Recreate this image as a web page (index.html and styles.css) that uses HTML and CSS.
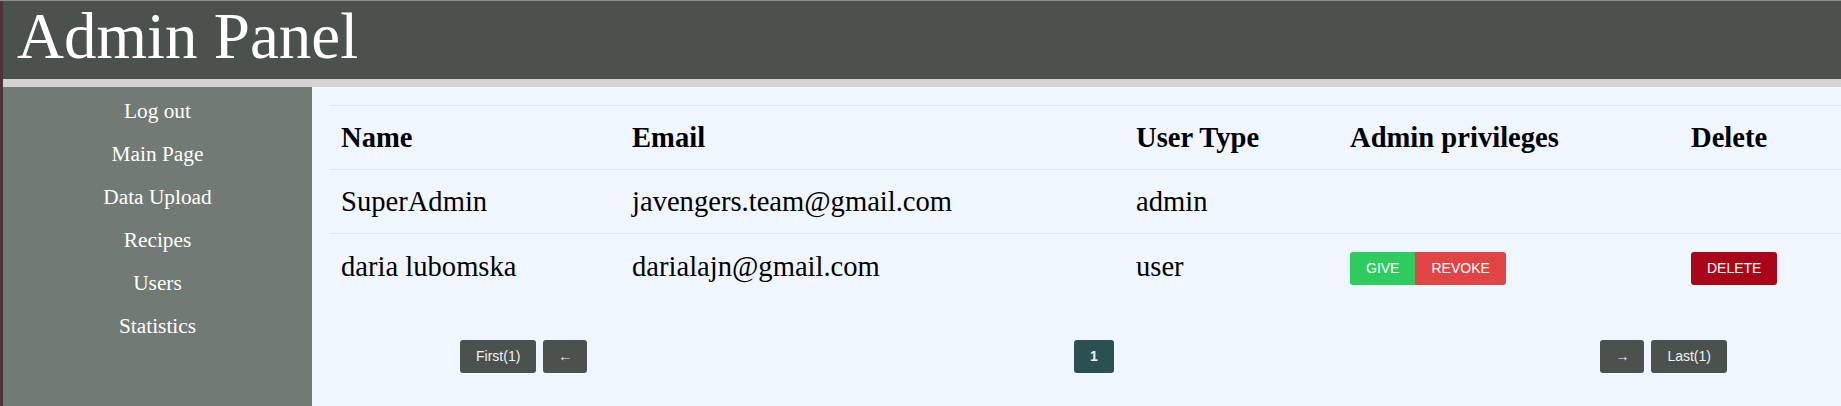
FILE: index.html
```html
<!DOCTYPE html>
<html lang="en">
<head>
<meta charset="utf-8">
<title>Admin Panel</title>
<link rel="stylesheet" href="styles.css">
</head>
<body>
<header class="topbar">
  <h1 class="title">Admin Panel</h1>
</header>
<div class="layout">
  <nav class="sidebar">
    <a href="#">Log out</a>
    <a href="#">Main Page</a>
    <a href="#">Data Upload</a>
    <a href="#">Recipes</a>
    <a href="#">Users</a>
    <a href="#">Statistics</a>
  </nav>
  <main class="main">
    <div class="inner">
      <table class="users">
        <colgroup>
          <col class="c-name"><col class="c-email"><col class="c-type"><col class="c-admin"><col class="c-del">
        </colgroup>
        <thead>
          <tr><th>Name</th><th>Email</th><th>User Type</th><th>Admin privileges</th><th>Delete</th></tr>
        </thead>
        <tbody>
          <tr><td>SuperAdmin</td><td>javengers.team@gmail.com</td><td>admin</td><td></td><td></td></tr>
          <tr>
            <td>daria lubomska</td><td>darialajn@gmail.com</td><td>user</td>
            <td><span class="btn-group"><button class="btn give">GIVE</button><button class="btn revoke">REVOKE</button></span></td>
            <td><button class="btn delete">DELETE</button></td>
          </tr>
        </tbody>
      </table>
      <div class="pager">
        <div class="pgroup"><button class="pbtn">First(1)</button><button class="pbtn arrow">&larr;</button></div>
        <div class="pgroup"><button class="pbtn current">1</button></div>
        <div class="pgroup"><button class="pbtn arrow">&rarr;</button><button class="pbtn">Last(1)</button></div>
      </div>
    </div>
  </main>
</div>
</body>
</html>
```
FILE: styles.css
```css
html, body {
  margin: 0;
  padding: 0;
}
body {
  background: #4b3337;
  border-top: 1px solid #8d8d8d;
  padding-left: 3px;
  min-height: 100vh;
  box-sizing: border-box;
  overflow: hidden;
  font-family: "Liberation Serif", "Times New Roman", serif;
  display: flex;
  flex-direction: column;
}
.topbar {
  height: 78px;
  background: #4b514d;
  border-bottom: 8px solid #d3d3d3;
  padding-left: 14px;
  flex: none;
}
.title {
  margin: 0;
  font-size: 65px;
  font-weight: normal;
  line-height: 71px;
  color: #ffffff;
}
.layout {
  display: flex;
  flex: 1;
  min-height: 0;
}
.sidebar {
  width: 309px;
  flex: none;
  background: #727a74;
  padding-top: 3px;
}
.sidebar a {
  display: block;
  line-height: 43px;
  text-align: center;
  color: #ffffff;
  font-size: 21.33px;
  text-decoration: none;
}
.main {
  flex: 1;
  min-width: 0;
  background: #eff6ff;
  padding: 18px 0 0 18px;
  overflow: hidden;
}
.inner {
  width: 1529px;
}
.users {
  width: 1529px;
  border-collapse: collapse;
  table-layout: fixed;
  font-size: 28.6px;
  line-height: 33px;
  color: #000;
}
.c-name { width: 291px; }
.c-email { width: 504px; }
.c-type { width: 214px; }
.c-admin { width: 341px; }
.c-del { width: 179px; }
.users th, .users td {
  border-top: 1px solid #e1e6ea;
  padding: 15px 11px;
  height: 33px;
  text-align: left;
  vertical-align: middle;
  white-space: nowrap;
}
.users th {
  font-weight: bold;
}
.btn-group {
  display: inline-flex;
  vertical-align: middle;
}
.btn {
  height: 33px;
  padding: 0 16px;
  border: none;
  color: #ffffff;
  font-family: "Liberation Sans", Arial, sans-serif;
  font-size: 14px;
  line-height: 33px;
  vertical-align: middle;
  cursor: pointer;
}
.give {
  background: #2ecc5f;
  border-radius: 3px 0 0 3px;
}
.revoke {
  background: #e04444;
  border-radius: 0 3px 3px 0;
}
.delete {
  background: #a90719;
  border-radius: 3px;
}
.pager {
  display: flex;
  justify-content: space-between;
  margin: 40px 132px 0 130px;
}
.pgroup {
  display: flex;
  gap: 7px;
}
.pbtn {
  height: 33px;
  padding: 0 16px;
  border: none;
  border-radius: 3px;
  background: #4b514d;
  color: #f2f2f2;
  font-family: "Liberation Sans", Arial, sans-serif;
  font-size: 14px;
  cursor: pointer;
}
.pbtn.arrow {
  padding: 0 15px;
}
.pbtn.current {
  background: #2b5051;
  font-weight: bold;
}
```
